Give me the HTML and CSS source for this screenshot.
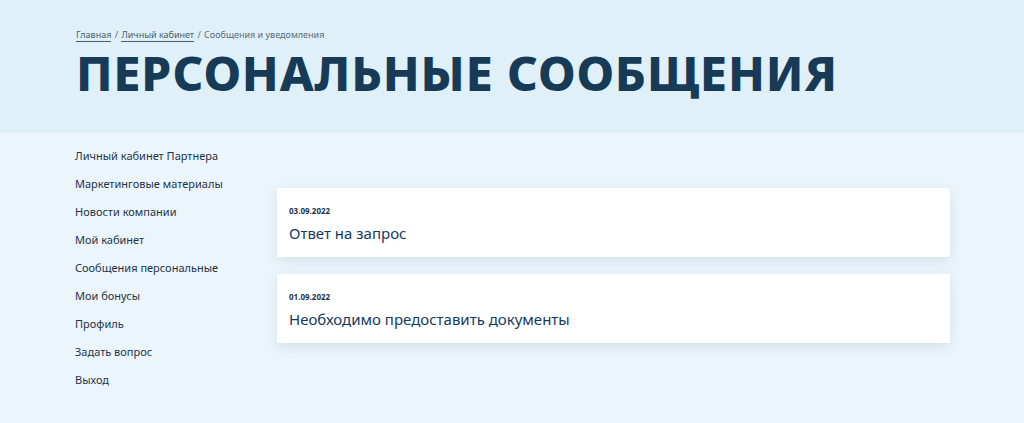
FILE: index.html
```html
<!DOCTYPE html>
<html lang="ru">
<head>
    <meta charset="UTF-8">
    <meta name="viewport" content="width=device-width, initial-scale=1.0">
    <title>Персональные сообщения</title>
    <link rel="stylesheet" href="styles.css">
</head>
<body>
    <div class="page-header">
        <div class="breadcrumbs">
            <a href="javascript:;">Главная</a>
            <span class="sep">/</span>
            <a href="javascript:;">Личный кабинет</a>
            <span class="sep">/</span>
            <span class="current">Сообщения и уведомления</span>
        </div>
        <h1 class="page-title">ПЕРСОНАЛЬНЫЕ СООБЩЕНИЯ</h1>
    </div>
    <div class="page-body">
        <ul class="side-menu">
            <li><a href="javascript:;">Личный кабинет Партнера</a></li>
            <li><a href="javascript:;">Маркетинговые материалы</a></li>
            <li><a href="javascript:;">Новости компании</a></li>
            <li><a href="javascript:;">Мой кабинет</a></li>
            <li><a href="javascript:;">Сообщения персональные</a></li>
            <li><a href="javascript:;">Мои бонусы</a></li>
            <li><a href="javascript:;">Профиль</a></li>
            <li><a href="javascript:;">Задать вопрос</a></li>
            <li><a href="javascript:;">Выход</a></li>
        </ul>
        <div class="messages">
            <a href="javascript:;" class="message">
                <div class="message-date">03.09.2022</div>
                <div class="message-title">Ответ на запрос</div>
            </a>
            <a href="javascript:;" class="message">
                <div class="message-date">01.09.2022</div>
                <div class="message-title">Необходимо предоставить документы</div>
            </a>
        </div>
    </div>
</body>
</html>
```

FILE: styles.css
```css
* {
    margin: 0;
    padding: 0;
    box-sizing: border-box;
}
body {
    font-family: "Noto Sans", "Open Sans", sans-serif;
    background-color: #ecf5fb;
    color: #163a59;
    height: 423px;
    overflow: hidden;
}
a {
    text-decoration: none;
    color: inherit;
}
.page-header {
    height: 133px;
    background-color: #dff0f8;
    padding: 28px 0 0 76px;
}
.breadcrumbs {
    font-size: 9px;
    line-height: 14px;
    color: #5a6b78;
}
.breadcrumbs a {
    color: #4b5d6b;
    border-bottom: 1px solid #4b5d6b;
}
.breadcrumbs .sep {
    margin: 0 1px;
}
.page-title {
    margin-top: 3px;
    font-family: "Noto Sans", sans-serif;
    font-weight: 800;
    font-size: 48px;
    line-height: 56px;
    letter-spacing: 0.9px;
    color: #173a57;
}
.side-menu {
    list-style: none;
    width: 202px;
    padding-top: 16px;
}
.page-body {
    display: flex;
    padding-left: 75px;
}
.side-menu li {
    height: 28px;
    font-size: 11px;
    line-height: 14px;
    color: #1e3447;
}
.messages {
    width: 673px;
    padding-top: 55px;
    display: flex;
    flex-direction: column;
    gap: 17px;
}
.message {
    display: block;
    height: 69px;
    background-color: #ffffff;
    box-shadow: 0px 4px 12px rgba(40, 80, 110, .12);
    padding: 17px 12px 0 12px;
}
.message-date {
    font-size: 8px;
    font-weight: 700;
    line-height: 12px;
    color: #1e3447;
}
.message-title {
    margin-top: 6px;
    font-size: 15px;
    line-height: 20px;
    color: #163a59;
}
```
